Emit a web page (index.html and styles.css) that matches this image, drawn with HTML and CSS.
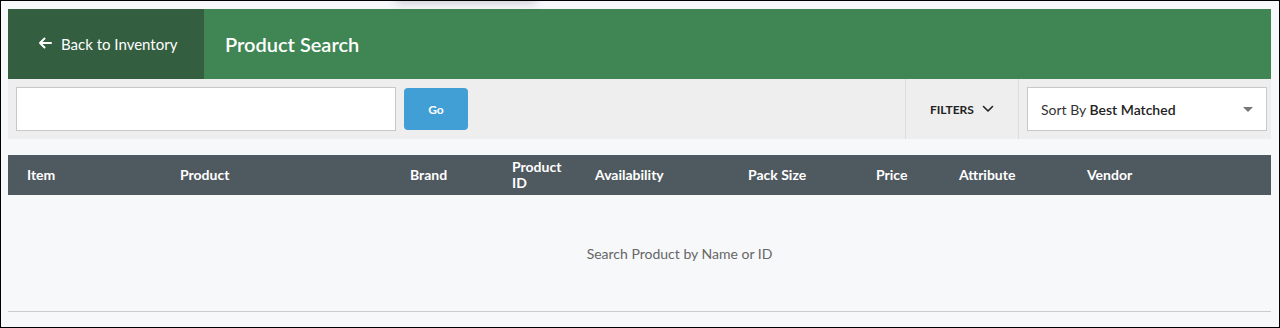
FILE: index.html
```html
<!DOCTYPE html>
<html lang="en">
<head>
  <meta charset="UTF-8" />
  <meta name="viewport" content="width=device-width, initial-scale=1.0"/>
  <title>Product Search</title>
  <link rel="stylesheet" href="styles.css">
</head>
<body>
  <div class="frame">
    <div class="menu-shadow"></div>

    <header class="topbar">
      <a class="back-link" href="#">
        <svg class="back-arrow" width="14" height="12" viewBox="0 0 14 12" aria-hidden="true">
          <path d="M13 6H2M6.5 1.5 2 6l4.5 4.5" fill="none" stroke="#fff" stroke-width="2" stroke-linecap="round" stroke-linejoin="round"/>
        </svg>
        <span>Back to Inventory</span>
      </a>
      <h1 class="page-title">Product Search</h1>
    </header>

    <div class="toolbar">
      <input class="search-input" type="text" />
      <button class="go-button">Go</button>
      <div class="spacer"></div>
      <button class="filters-button">
        FILTERS
        <svg width="12" height="8" viewBox="0 0 12 8" aria-hidden="true">
          <path d="M1.5 1.5 6 6l4.5-4.5" fill="none" stroke="#222" stroke-width="1.6" stroke-linecap="round" stroke-linejoin="round"/>
        </svg>
      </button>
      <div class="sort-select">
        <span>Sort By <b>Best Matched</b></span>
        <span class="caret"></span>
      </div>
    </div>

    <div class="results">
      <div class="table-head">
        <div class="col col-item">Item</div>
        <div class="col col-product">Product</div>
        <div class="col col-brand">Brand</div>
        <div class="col col-id">Product ID</div>
        <div class="col col-avail">Availability</div>
        <div class="col col-pack">Pack Size</div>
        <div class="col col-price">Price</div>
        <div class="col col-attr">Attribute</div>
        <div class="col col-vendor">Vendor</div>
      </div>
      <div class="empty-row">Search Product by Name or ID</div>
    </div>
  </div>
</body>
</html>
```

FILE: styles.css
```css
* {
  box-sizing: border-box;
}

body {
  margin: 0;
  font-family: 'Lato', 'Liberation Sans', sans-serif;
  background: #fff;
}

.frame {
  position: relative;
  height: 328px;
  border: 1px solid #000;
  padding: 8px 8px 0 7px;
  background: #f7f8fa;
  overflow: hidden;
}

/* shadow of a menu sitting above the page */
.menu-shadow {
  position: absolute;
  top: -14px;
  left: 395px;
  width: 140px;
  height: 14px;
  box-shadow: 0 2px 10px rgba(60, 70, 100, 0.25);
}

.topbar {
  display: flex;
  height: 70px;
  background: #3f8654;
  color: #fff;
}

.back-link {
  display: flex;
  align-items: center;
  gap: 9px;
  width: 196px;
  padding-left: 30px;
  background: #335e40;
  color: #fff;
  text-decoration: none;
  font-size: 15px;
}

.back-arrow {
  margin-top: -2px;
}

.page-title {
  margin: 0;
  display: flex;
  align-items: center;
  padding-left: 21px;
  font-size: 20px;
  font-weight: 600;
}

.toolbar {
  display: flex;
  align-items: center;
  height: 60px;
  padding: 0 4px 0 8px;
  background: #eeeeee;
}

.search-input {
  width: 380px;
  height: 44px;
  border: 1px solid #c8c8c8;
  background: #fff;
  font-family: inherit;
}

.go-button {
  width: 64px;
  height: 42px;
  margin-left: 8px;
  border: none;
  border-radius: 4px;
  background: #419fd5;
  color: #fff;
  font-family: inherit;
  font-size: 12px;
  font-weight: 700;
}

.spacer {
  flex: 1;
}

.filters-button {
  display: flex;
  align-items: center;
  gap: 8px;
  height: 60px;
  width: 114px;
  padding-left: 24px;
  border: none;
  border-left: 1px solid #d9dde0;
  border-right: 1px solid #d9dde0;
  background: transparent;
  color: #222;
  font-family: inherit;
  font-size: 12px;
  font-weight: 700;
}

.sort-select {
  display: flex;
  align-items: center;
  justify-content: space-between;
  width: 240px;
  height: 44px;
  margin-left: 8px;
  padding: 0 13px 0 13px;
  border: 1px solid #c8c8c8;
  background: #fff;
  color: #333;
  font-size: 14px;
}

.sort-select b {
  font-weight: 600;
  color: #222;
}

.caret {
  width: 0;
  height: 0;
  border-left: 5px solid transparent;
  border-right: 5px solid transparent;
  border-top: 5px solid #777;
}

.results {
  margin-top: 16px;
}

.table-head {
  display: flex;
  align-items: center;
  height: 40px;
  padding-left: 19px;
  background: #4f5960;
  color: #fff;
  font-size: 14px;
  font-weight: 700;
  line-height: 16px;
}

.col {
  flex-shrink: 0;
}

.col-item { width: 153px; }
.col-product { width: 230px; }
.col-brand { width: 102px; }
.col-id { width: 83px; padding-right: 25px; }
.col-avail { width: 153px; }
.col-pack { width: 128px; }
.col-price { width: 83px; }
.col-attr { width: 128px; }

.empty-row {
  display: flex;
  align-items: center;
  justify-content: center;
  height: 117px;
  padding-left: 80px;
  border-bottom: 1px solid #cccccc;
  color: #666;
  font-size: 14px;
}
```
